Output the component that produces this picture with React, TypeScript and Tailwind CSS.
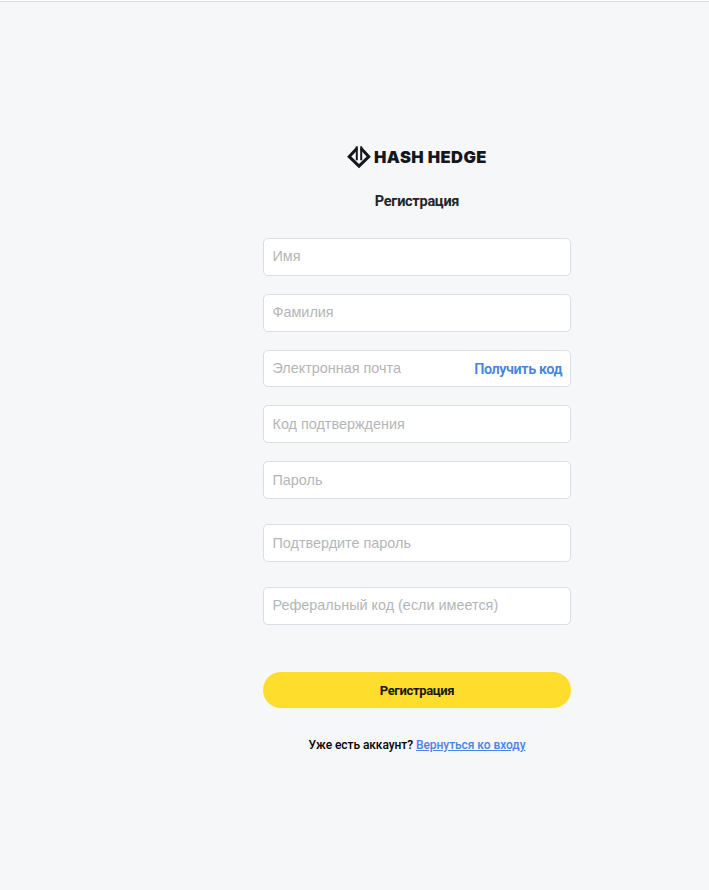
import { useState } from "react";
import type { FormEvent } from "react";
import clsx from "clsx";

type Field = {
  name: string;
  placeholder: string;
  type: string;
  className: string;
};

const fields: Field[] = [
  { name: "firstName", placeholder: "Имя", type: "text", className: "mb-[18px] h-[38px]" },
  { name: "lastName", placeholder: "Фамилия", type: "text", className: "mb-[18px] h-[38px]" },
  { name: "email", placeholder: "Электронная почта", type: "email", className: "mb-[18px] h-[37px] pt-px" },
  { name: "code", placeholder: "Код подтверждения", type: "text", className: "mb-[18px] h-[38px] pt-0.5" },
  { name: "password", placeholder: "Пароль", type: "password", className: "mb-[25px] h-[38px] pt-0.5" },
  { name: "passwordConfirm", placeholder: "Подтвердите пароль", type: "password", className: "mb-[25px] h-[38px] pt-0.5" },
  { name: "referral", placeholder: "Реферальный код (если имеется)", type: "text", className: "mb-[47px] h-[38px]" },
];

function Logo() {
  return (
    <div className="flex h-6 items-center gap-[3.5px] pr-px text-[#15171f]">
      <svg width="24" height="24" viewBox="0 0 24 24" fill="none" stroke="currentColor">
        <path d="M10 3.2L2.2 11.7L12 21.2L21.8 11.7L14 3.2" strokeWidth="3" />
        <path d="M9.8 1.2V15.2M14.2 1.2V15.2" strokeWidth="2" />
      </svg>
      <span className="mr-[-0.4px] font-[Inter,sans-serif] text-[16.5px] leading-6 font-black tracking-[0.42px] whitespace-nowrap">
        HASH HEDGE
      </span>
    </div>
  );
}

export default function App() {
  const [values, setValues] = useState<Record<string, string>>({});

  const handleSubmit = (event: FormEvent) => {
    event.preventDefault();
  };

  return (
    <div className="min-h-screen bg-white pt-px font-[Roboto,sans-serif]">
      <main className="flex min-h-[889px] justify-end border-t border-[#d9dde2] bg-[#f5f7f9] pt-[143px] pr-[138px]">
        <form onSubmit={handleSubmit} className="flex w-[308px] flex-col">
          <header className="flex flex-col items-center">
            <Logo />
            <h1 className="mt-[23px] mb-[26px] text-[14.5px] leading-5 font-bold tracking-[-0.27px] whitespace-nowrap text-[#222528]">
              Регистрация
            </h1>
          </header>

          {fields.map((field) => (
            <div
              key={field.name}
              className={clsx("flex shrink-0 items-center rounded-[5px] border border-[#d9dfe6] bg-white pr-2 pl-[8.5px]", field.className)}
            >
              <input
                name={field.name}
                type={field.type}
                placeholder={field.placeholder}
                value={values[field.name] ?? ""}
                onChange={(event) => setValues({ ...values, [field.name]: event.target.value })}
                className="h-5 min-w-0 flex-1 bg-transparent pb-px font-['Liberation_Sans',sans-serif] text-[14.4px] text-[#222528] outline-none placeholder:text-[#b3b6b9]"
              />
              {field.name === "email" && (
                <button
                  type="button"
                  className="shrink-0 pt-px text-[14.4px] leading-5 font-semibold tracking-[-0.42px] whitespace-nowrap text-[#4484dc]"
                >
                  Получить код
                </button>
              )}
            </div>
          ))}

          <button type="submit" className="h-9 shrink-0 rounded-full bg-[#ffdd2d] pt-px text-[13px] font-bold tracking-[-0.34px] text-[#19170b]">
            Регистрация
          </button>

          <p className="mt-7 text-center text-[12px] leading-[18px] font-medium tracking-[-0.06px] whitespace-nowrap text-black">
            Уже есть аккаунт?{" "}
            <a href="#login" className="text-[#4b83e6] underline">
              Вернуться ко входу
            </a>
          </p>
        </form>
      </main>
    </div>
  );
}
